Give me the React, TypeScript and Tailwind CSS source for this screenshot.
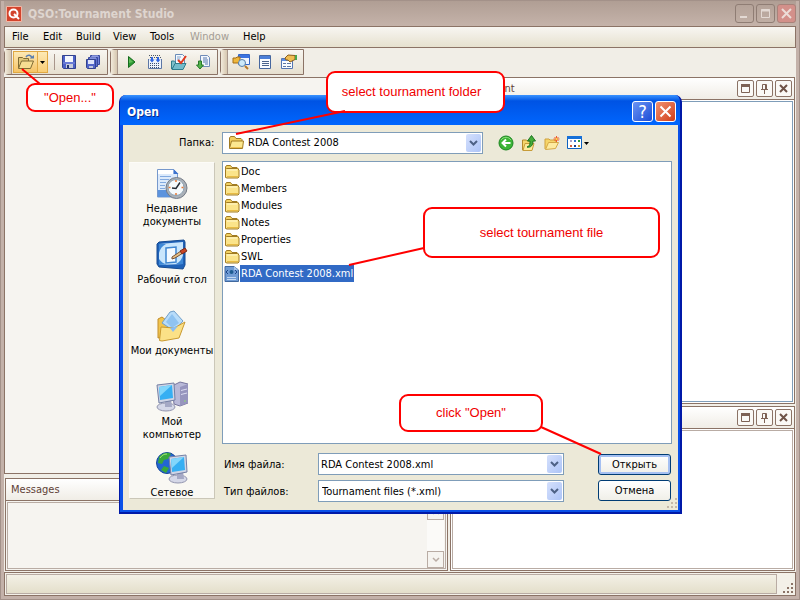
import type { ReactNode } from "react";

type IconProps = { children: ReactNode; size?: number };

function Glyph({ children, size = 16 }: IconProps) {
  return (
    <svg width={size} height={size} viewBox={`0 0 ${size} ${size}`} className="block shrink-0" aria-hidden="true">
      {children}
    </svg>
  );
}

/* ---------- toolbar icons ---------- */

const OpenIcon = () => (
  <svg width="18" height="16" viewBox="0 0 18 16" className="block shrink-0" aria-hidden="true">
    <path d="M1.500 14V3.500h4l1 1h5V7" fill="#e3c878" stroke="#7f6b35" />
    <path d="M1.500 14.500 4.500 7h12l-3 7.500z" fill="#f6dd92" stroke="#7f6b35" />
    <path d="M9 3c2-3 5-2 6 1" fill="none" stroke="#5b7fb0" strokeWidth="1.500" />
    <path d="M12.500 4.500h4.500V1z" fill="#5b7fb0" />
  </svg>
);

const SaveIcon = () => (
  <Glyph>
    <path d="M1.500 1.500h13v13h-12l-1-1z" fill="#4d61c8" stroke="#33438f" />
    <path d="M4 2h8v6H4z" fill="#f4f7fd" />
    <path d="M2 9h12" stroke="#8796e2" />
    <path d="M5 10h7v4H5z" fill="#c6cbdc" />
    <path d="M6 11h2v3H6z" fill="#26356f" />
  </Glyph>
);

const SaveAllIcon = () => (
  <Glyph>
    <path d="M5.500 1.500h9v9h-9z" fill="#7283db" stroke="#38489d" />
    <path d="M3.500 3.500h9v9h-9z" fill="#5b6dd0" stroke="#38489d" />
    <path d="M7 2h6M5 4h6" stroke="#a9b4ee" />
    <path d="M1.500 5.500h9v9h-8l-1-1z" fill="#5265c9" stroke="#33438f" />
    <path d="M3 6h6v4H3z" fill="#dfe4fa" />
    <path d="M4 12h4v2H4z" fill="#c1c7de" />
  </Glyph>
);

const PlayIcon = () => (
  <Glyph>
    <path d="M5.500 2.500v11L12 8z" fill="#2c9a33" stroke="#156a1c" />
    <path d="M6 4v5l4-1z" fill="#60bd58" />
  </Glyph>
);

const BuildIcon = () => (
  <Glyph>
    <path d="M2 1.500h12M3 3.500h11" stroke="#4b5665" strokeDasharray="1 1" />
    <path d="M1.500 5v9.500h13V5" fill="#eef3fb" stroke="#5c76a5" />
    <path d="M3 9.500h10M3 11.500h10M3 13.500h10" stroke="#3c4f72" strokeDasharray="1 1" />
    <path d="M5 3v4M11 3v4" stroke="#2f65e0" strokeWidth="2" />
    <path d="M2.500 5.500h5L5 8.500zM8.500 5.500h5L11 8.500z" fill="#2f65e0" />
  </Glyph>
);

const CheckDocIcon = () => (
  <Glyph>
    <path d="M4.500.5h7l2 2V10h-9z" fill="#f5f9fe" stroke="#6a8cb8" />
    <path d="M6 3h4M6 5h3" stroke="#7da0cb" />
    <path d="M.5 15V7h3l1 1v3z" fill="#7fc0ca" stroke="#2e7d8c" />
    <path d="m1 15.500 3-6h11l-3 6z" fill="#73bccb" stroke="#2e7d8c" />
    <path d="m7 6 3 3 5-7" fill="none" stroke="#e4391c" strokeWidth="2" />
  </Glyph>
);

const ExportIcon = () => (
  <Glyph>
    <path d="M5.500 1.500h7l2 2v9h-9z" fill="#f3f7fd" stroke="#6f8bb8" />
    <path d="M8 4h4M8 6h5M8 8h5M10 10h3" stroke="#5577ae" />
    <path d="M3.500 7v4h-2L5 15l3.500-4h-2V7z" fill="#55b34b" stroke="#27792a" />
  </Glyph>
);

const FindIcon = () => (
  <svg width="18" height="16" viewBox="0 0 18 16" className="block shrink-0" aria-hidden="true">
    <path d="M6.500.5h11v10h-11z" fill="#f1f6ff" stroke="#3466c8" />
    <path d="M7 1h10v3H7z" fill="#3c73e0" />
    <path d="M1 4h3l1-1h3v6H1z" fill="#efb73b" stroke="#a36d17" />
    <circle cx="10" cy="9" r="3.500" fill="#cdeafa" stroke="#577faa" />
    <path d="m13 12 3 3" stroke="#b7792a" strokeWidth="2" />
  </svg>
);

const ListIcon = () => (
  <Glyph>
    <path d="M2.500 1.500h11v13h-11z" fill="#fafcff" stroke="#47679f" />
    <path d="M3 2h10v3H3z" fill="#4c7fd8" />
    <path d="M5 7.500h7M5 9.500h7M5 11.500h7" stroke="#4b638c" />
  </Glyph>
);

const PropertiesIcon = () => (
  <svg width="18" height="16" viewBox="0 0 18 16" className="block shrink-0" aria-hidden="true">
    <path d="M1.500 4.500h11v10h-11z" fill="#fafcff" stroke="#5576b3" />
    <path d="M2 5h10v2H2z" fill="#5c8ce2" />
    <path d="M3 9.500h3M7 9.500h4M3 12.500h3M7 12.500h4" stroke="#5f78a5" />
    <path d="M5 4 8 1l7 .5v4L10 8 8 6H6z" fill="#f0bd52" stroke="#8a5d1b" />
    <path d="M15 1h2v5h-2z" fill="#4aa64b" />
  </svg>
);

/* ---------- dialog icons ---------- */

const FolderIcon = () => (
  <Glyph>
    <path d="M1.500 3 2.500 1.500h4L8 3.500h5l1 1V13h-12z" fill="#f3d263" stroke="#a17b22" />
    <path d="M1.500 13.500v-8l1-1h11l1.500 1.500v7l-1 1h-11z" fill="#fbe48a" stroke="#a17b22" />
    <path d="M3 6h10" stroke="#fff8cf" />
    <path d="M3 12.500h11" stroke="#e8bb44" />
  </Glyph>
);

const OpenFolderIcon = () => (
  <Glyph>
    <path d="M1.500 13V3l1-1.500h4L8 3.500h5l1 1V7" fill="#f3cf5e" stroke="#a17b22" />
    <path d="M1.500 13.500 3.500 6h12l-1 7.500z" fill="#fce88f" stroke="#a17b22" />
    <path d="M3 12.500h11" stroke="#efc04c" />
  </Glyph>
);

const XmlIcon = () => (
  <Glyph>
    <path d="M1 .5h9L14.500 4v11.500H1z" fill="#6f9bd4" stroke="#41699f" />
    <path d="M10 0v4h4" fill="#a6c4ea" />
    <path d="m4 4-2 2 2 2M11 4l2 2-2 2" fill="none" stroke="#1e4688" />
    <circle cx="7.500" cy="6" r="2" fill="#1d5b91" />
    <path d="M3 11.500h9M3 13.500h9" stroke="#c3d8f1" />
  </Glyph>
);

const BackIcon = () => (
  <Glyph>
    <circle cx="8" cy="8" r="7" fill="#3bb435" stroke="#1d8622" />
    <path d="M3 5a6 6 0 0 1 10 0" fill="none" stroke="#8ddc7d" />
    <path d="M12.500 8H5M8 4.500 4.500 8 8 11.500" fill="none" stroke="#fff" strokeWidth="2" />
  </Glyph>
);

const UpIcon = () => (
  <Glyph>
    <path d="M1.500 15V5h4l1 1h5v8z" fill="#f6d76d" stroke="#b4892b" />
    <path d="m2 15.500 2-7h9l-2 7z" fill="#fdeb9c" stroke="#c79c38" />
    <path d="M6 12c3-1 3-3 3-6H6.500l4-5.500 4 5.500H12c0 4-2 7-6 6z" fill="#45ad39" stroke="#1d7421" />
  </Glyph>
);

const NewFolderIcon = () => (
  <Glyph>
    <path d="M1 14V4h4l1 1h6v3" fill="#f6d56a" stroke="#cfa13d" />
    <path d="m1.500 14.500 3-7h10l-3 6z" fill="#fdeba0" stroke="#d5a845" />
    <path d="M12.500 1v6M9.500 4h6M10.500 2l4 4M14.500 2l-4 4" stroke="#ee5b2d" />
    <circle cx="12.500" cy="4" r="1" fill="#ffe14d" />
  </Glyph>
);

const ViewsIcon = () => (
  <svg width="23" height="16" viewBox="0 0 23 16" className="block shrink-0" aria-hidden="true">
    <path d="M.5 1.500h14v12H.5z" fill="#fff" stroke="#0e62c0" />
    <path d="M0 1h15v3H0z" fill="#1670d8" />
    <path d="M3 5h2v2H3z" fill="#a9a0c8" />
    <path d="M7 5h2v2H7z" fill="#2f6fd0" />
    <path d="M11 5h2v2h-2z" fill="#2d9a3c" />
    <path d="M3 10h2v2H3z" fill="#d9603a" />
    <path d="M7 10h2v2H7z" fill="#173c8c" />
    <path d="M11 10h2v2h-2z" fill="#c79b2e" />
    <path d="M17 7h5l-2.500 3z" fill="#000" />
  </svg>
);

/* ---------- places bar icons ---------- */

const RecentIcon = () => (
  <Glyph size={32}>
    <path d="M1.500 1.500h16l4 4V29h-20z" fill="#dceafb" stroke="#7698cc" />
    <path d="M2 2h15v4H2z" fill="#fff" />
    <path d="M17.500 1v5h5z" fill="#3d73ce" />
    <path d="M4 8.500h11M4 11.500h9M4 14.500h6M4 17.500h5M4 20.500h5" stroke="#82aae0" />
    <path d="M2 22h20v7H2z" fill="#5c93dd" />
    <circle cx="20.500" cy="20" r="10.500" fill="#abb1b8" stroke="#737b86" />
    <circle cx="20" cy="19.500" r="8" fill="#f5fafc" stroke="#8ba0b0" />
    <path d="M20 12v2M20 25v2M12.500 19.500h2M25.500 19.500h2" stroke="#e57735" strokeWidth="1.500" />
    <path d="m16 20 4 .5 4-6" fill="none" stroke="#232a34" strokeWidth="1.500" />
  </Glyph>
);

const DesktopIcon = () => (
  <Glyph size={32}>
    <path d="M1 5 3 3l25-2 1 2v23l-2 4-24-2-2-3z" fill="#1f62b8" stroke="#164b91" />
    <path d="M3 5 27 3v22L3 26z" fill="#c9e6fc" />
    <path d="M3 5h7c-4 2-6 5-7 9zM27 25h-7c4-2 6-5 7-9zM3 26v-6c2 3 5 5 8 5.500z" fill="#3d88d6" />
    <path d="m10 9 10-1v15l-10 1z" fill="#f4faff" stroke="#3f86d0" strokeWidth="1.500" />
    <path d="m16 18 9-6 2 2-8 5-3 1z" fill="#e9c286" stroke="#745037" />
    <path d="m24 12 5-3 2 3-5 3z" fill="#c94524" stroke="#7d2c19" />
  </Glyph>
);

const DocumentsIcon = () => (
  <Glyph size={32}>
    <path d="M2 28V9l4-2 4 3 10 3v12z" fill="#f1c44e" stroke="#c28d29" />
    <path d="M6 13 14 2l4-1 9 10-9 10z" fill="#b7dcfa" stroke="#719fc9" />
    <path d="m10 12 6-8 7 9-7 5z" fill="#8fc3f1" />
    <path d="M3.500 30.500 5 17l13 1 11-6-6 16-17 3z" fill="#fbe187" stroke="#c99a30" />
    <path d="m14 18 8-2-5 6z" fill="#8abdf1" />
  </Glyph>
);

const Monitor = ({ x, y }: { x: number; y: number }) => (
  <g transform={`translate(${x} ${y})`}>
    <ellipse cx="10" cy="25" rx="9" ry="4" fill="#d5d8e8" stroke="#9295af" />
    <path d="m9 18 6-1 1 8H9z" fill="#a5a9c5" />
    <path d="M1 3 18 1l1 17-16 3z" fill="#cfd5e6" stroke="#7580a4" />
    <path d="m3 5 13-2 1 13-13 2z" fill="#36aff3" />
    <path d="m3 5 13-2-12 11z" fill="#83d6fb" />
  </g>
);

const ComputerIcon = () => (
  <Glyph size={32}>
    <path d="m16 5 8-4 8 2v19l-8 3-6-2z" fill="#b9b9d8" stroke="#77759c" />
    <path d="m24 6 8-3v19l-8 3z" fill="#9795be" />
    <path d="M25 9.500 31 8M25 13.500 31 12" stroke="#dcdcf1" />
    <path d="M28 20h2" stroke="#8ddb72" />
    <Monitor x={0} y={1} />
  </Glyph>
);

const NetworkIcon = () => (
  <Glyph size={32}>
    <circle cx="11" cy="11" r="10.500" fill="#2366d3" stroke="#16479b" />
    <path d="M3 5c4-5 9-5 12-3l-3 5-4 1-2 4-4-1zM8 14l5 2-3 5-5-3z" fill="#39a83b" />
    <path d="M4 6c2-3 4-4 7-4" fill="none" stroke="#a9e478" />
    <Monitor x={12} y={2} />
  </Glyph>
);

/* ---------- main window ---------- */

function Toolbar({ children, label }: { children: ReactNode; label: string }) {
  return (
    <div
      role="toolbar"
      aria-label={label}
      className="flex h-[26px] items-stretch rounded-l-sm border border-[#8b7366] bg-linear-to-b from-[#f8f6f1] to-[#e6dfcf] pr-[2px]"
    >
      <span className="mr-px w-[7px] border-r border-[#a8968b] bg-linear-to-r from-[#f2ebdc] to-[#d6c7b0]" />
      {children}
    </div>
  );
}

function ToolButton({ label, children }: { label: string; children: ReactNode }) {
  return (
    <button type="button" aria-label={label} className="flex w-6 items-center justify-center">
      {children}
    </button>
  );
}

function CaptionButton({ label, close, children }: { label: string; close?: boolean; children: ReactNode }) {
  return (
    <button
      type="button"
      aria-label={label}
      className={
        close
          ? "flex size-[19px] items-center justify-center rounded-[3px] border border-[#a8827a] bg-[#d3908a]"
          : "flex size-[19px] items-center justify-center rounded-[3px] border border-[#8f7d74] bg-linear-to-b from-[#b5a399] to-[#c0aea4]"
      }
    >
      {children}
    </button>
  );
}

function PanelButton({ label, children }: { label: string; children: ReactNode }) {
  return (
    <button
      type="button"
      aria-label={label}
      className="flex size-[17px] items-center justify-center rounded-[2px] border border-[#8b7366] bg-[#faf9f6]"
    >
      <svg width="11" height="11" viewBox="0 0 11 11" aria-hidden="true">
        {children}
      </svg>
    </button>
  );
}

function PanelHeader({ title, controls }: { title: string; controls?: boolean }) {
  return (
    <div className="flex h-[22px] shrink-0 items-center gap-[2px] border-b border-[#8b7366] bg-linear-to-b from-white to-[#f0ede6] pr-[2px] pl-[5px] text-[#5f4136]">
      <h2 className="flex-1">{title}</h2>
      {controls && (
        <>
          <PanelButton label="Maximize panel">
            <path d="M1.500 1.500h8v8h-8z" fill="none" stroke="#7d6255" />
            <path d="M1 1h9v3H1z" fill="#7d6255" />
          </PanelButton>
          <PanelButton label="Pin panel">
            <path d="M3.500 6V1.500h4V6M2 6.500h7M5.500 7v4M6.500 2v4" fill="none" stroke="#7d6255" />
          </PanelButton>
          <PanelButton label="Close panel">
            <path d="m2 2 7 7M9 2 2 9" stroke="#6e5347" strokeWidth="2" />
          </PanelButton>
        </>
      )}
    </div>
  );
}

function ScrollArrow({ up }: { up?: boolean }) {
  return (
    <button
      type="button"
      aria-label={up ? "Scroll up" : "Scroll down"}
      className="flex size-[17px] items-center justify-center border border-[#b9aca4] bg-[#f6f4f0]"
    >
      <svg width="8" height="6" viewBox="0 0 8 6" aria-hidden="true">
        <path d={up ? "M1 5l3-3 3 3" : "M1 1l3 3 3-3"} fill="none" stroke="#b9aca4" strokeWidth="1.500" />
      </svg>
    </button>
  );
}

function Grip({ color }: { color: string }) {
  return (
    <svg width="11" height="11" viewBox="0 0 11 11" className="block" aria-hidden="true">
      <path d="M8 0h2v2H8zM4 4h2v2H4zM8 4h2v2H8zM0 8h2v2H0zM4 8h2v2H4zM8 8h2v2H8z" fill={color} />
    </svg>
  );
}

const menus = [
  { name: "File", width: "w-[31px]" },
  { name: "Edit", width: "w-[33px]" },
  { name: "Build", width: "w-[37px]" },
  { name: "View", width: "w-[37px]" },
  { name: "Tools", width: "w-[40px]" },
  { name: "Window", width: "w-[53px]", disabled: true },
  { name: "Help", width: "w-[37px]" },
];

function MainWindow() {
  return (
    <div className="flex h-full flex-col border border-[#a39189] bg-[#c3b1a9] px-[3px] pb-[3px]">
      <header className="flex h-[25px] shrink-0 items-center gap-[2px] bg-linear-to-b from-[#b09e94] to-[#c5b3aa] pl-[2px]">
        <svg width="16" height="16" viewBox="0 0 16 16" className="mr-1" aria-hidden="true">
          <path d="M.5.5h15v15H.5z" fill="#d3432c" stroke="#f3b7a6" />
          <circle cx="7.500" cy="7.500" r="4" fill="none" stroke="#fff" strokeWidth="2" />
          <path d="m8 8 5 5" stroke="#fff" strokeWidth="2" />
        </svg>
        <h1 className="flex-1 text-[12px] font-bold text-[#ded5cf]">QSO:Tournament Studio</h1>
        <CaptionButton label="Minimize">
          <svg width="11" height="11" viewBox="0 0 11 11"><path d="M1 9h7" stroke="#e3d9d3" strokeWidth="2" /></svg>
        </CaptionButton>
        <CaptionButton label="Maximize">
          <svg width="11" height="11" viewBox="0 0 11 11">
            <path d="M1.500 1.500h8v8h-8z" fill="none" stroke="#e3d9d3" />
            <path d="M1 2.500h9" stroke="#e3d9d3" strokeWidth="2" />
          </svg>
        </CaptionButton>
        <CaptionButton label="Close" close>
          <svg width="11" height="11" viewBox="0 0 11 11"><path d="m1 1 9 9M10 1l-9 9" stroke="#ecdcd7" strokeWidth="2" /></svg>
        </CaptionButton>
      </header>

      <div className="flex min-h-0 flex-1 flex-col bg-[#f1eee7]">
        <nav className="flex h-[22px] shrink-0 items-center border border-[#8b7366] bg-linear-to-b from-[#f8f6f2] to-[#e6e1cf] pl-[7px]">
          {menus.map((m) => (
            <button key={m.name} type="button" disabled={m.disabled} className={`${m.width} text-left text-black disabled:text-[#a39c94]`}>
              {m.name}
            </button>
          ))}
        </nav>

        <div className="flex h-[29px] shrink-0 items-start gap-[2px] pt-px">
          <Toolbar label="Standard">
            <button type="button" aria-label="Open" className="my-px flex w-[25px] items-center justify-center border border-[#e0a843] bg-linear-to-b from-[#fde9b4] to-[#f6c466]">
              <OpenIcon />
            </button>
            <button type="button" aria-label="Recent tournaments" className="my-px mr-1 flex w-[10px] items-center justify-center border border-l-0 border-[#e0a843] bg-linear-to-b from-[#fde9b4] to-[#f9cd75]">
              <svg width="5" height="3" viewBox="0 0 5 3" aria-hidden="true"><path d="M0 0h5L2.500 3z" fill="#000" /></svg>
            </button>
            <span className="mx-[2px] my-1 w-px bg-[#a8968b]" />
            <ToolButton label="Save"><SaveIcon /></ToolButton>
            <ToolButton label="Save all"><SaveAllIcon /></ToolButton>
          </Toolbar>
          <Toolbar label="Build">
            <ToolButton label="Run"><PlayIcon /></ToolButton>
            <ToolButton label="Build"><BuildIcon /></ToolButton>
            <ToolButton label="Check"><CheckDocIcon /></ToolButton>
            <ToolButton label="Export"><ExportIcon /></ToolButton>
          </Toolbar>
          <Toolbar label="View">
            <ToolButton label="Find"><FindIcon /></ToolButton>
            <ToolButton label="List"><ListIcon /></ToolButton>
            <ToolButton label="Properties"><PropertiesIcon /></ToolButton>
          </Toolbar>
        </div>

        <main className="flex min-h-0 flex-1 gap-[2px] pr-px">
          <div className="flex min-w-0 flex-1 flex-col gap-1">
            <div className="min-h-0 flex-1 border border-[#8b7366] bg-[#f6f4f0]" />
            <section className="ml-px flex h-[93px] shrink-0 flex-col border border-[#8b7366] bg-[#f6f4f0]">
              <PanelHeader title="Messages" />
              <div className="m-px flex min-h-0 flex-1 justify-end border border-[#b9aca4] pr-px">
                <div className="flex w-[17px] flex-col justify-between bg-[#fbfaf8]">
                  <ScrollArrow up />
                  <ScrollArrow />
                </div>
              </div>
            </section>
          </div>
          <div className="flex w-[345px] shrink-0 flex-col gap-[2px]">
            <section className="flex min-h-0 flex-2 flex-col border border-[#8b7366] bg-white">
              <PanelHeader title="Tournament" controls />
              <div className="m-px min-h-0 flex-1 border border-[#7f9db9]" />
            </section>
            <section className="flex min-h-0 flex-1 flex-col border border-[#8b7366] bg-white">
              <PanelHeader title="" controls />
              <div className="m-px min-h-0 flex-1 border border-[#b9aca4]" />
            </section>
          </div>
        </main>

        <footer className="mt-px flex h-[24px] shrink-0 items-end border border-[#8b7366] bg-[#f3f0e8] p-px">
          <div className="h-full flex-1 border border-[#b9aca4] bg-linear-to-b from-[#f3f0e6] to-[#e4dfcb]" />
          <div className="flex w-[17px] justify-end"><Grip color="#8b7366" /></div>
        </footer>
      </div>
    </div>
  );
}

/* ---------- open dialog ---------- */

const chevron = (
  <svg width="9" height="7" viewBox="0 0 9 7" aria-hidden="true">
    <path d="m1 1 3.500 3.500L8 1" fill="none" stroke="#4d6185" strokeWidth="2" />
  </svg>
);

const dropClass =
  "m-px flex w-[15px] shrink-0 items-center justify-center rounded-[2px] bg-linear-to-br from-[#d5e0fc] to-[#adc4f7]";

const places = [
  { lines: ["Недавние", "документы"], icon: <RecentIcon /> },
  { lines: ["Рабочий стол"], icon: <DesktopIcon /> },
  { lines: ["Мои документы"], icon: <DocumentsIcon /> },
  { lines: ["Мой", "компьютер"], icon: <ComputerIcon /> },
  { lines: ["Сетевое"], icon: <NetworkIcon /> },
];

const folders = ["Doc", "Members", "Modules", "Notes", "Properties", "SWL"];

function OpenDialog() {
  return (
    <div
      role="dialog"
      aria-labelledby="dialog-title"
      className="absolute top-[95px] left-[119px] flex h-[419px] w-[563px] flex-col overflow-hidden rounded-t-[7px] border-r-2 border-b-2 border-l border-[#0019a8] bg-[#0a50e8]"
    >
      <div className="flex h-[30px] shrink-0 items-center gap-[2px] bg-linear-to-b from-[#3a93ff] via-[#0053e4] via-20% to-[#0066fe] pt-[3px] pr-1 pl-[7px]">
        <h2 id="dialog-title" className="flex-1 text-[12px] font-bold text-white [text-shadow:1px_1px_0_#0a2c8c]">
          Open
        </h2>
        <button type="button" aria-label="Help" className="flex size-[21px] items-center justify-center rounded-[3px] border border-white bg-linear-to-br from-[#6c93f3] to-[#1b4bd6] text-[18px] leading-4 text-white">
          ?
        </button>
        <button type="button" aria-label="Close" className="flex size-[21px] items-center justify-center rounded-[3px] border border-white bg-linear-to-br from-[#f0906f] to-[#cf3a12]">
          <svg width="13" height="13" viewBox="0 0 13 13" aria-hidden="true"><path d="m1.500 1.500 10 10M11.500 1.500l-10 10" stroke="#fff" strokeWidth="2" /></svg>
        </button>
      </div>

      <div className="mr-[2px] mb-[2px] ml-[3px] flex min-h-0 flex-1 gap-[7px] bg-[#ece9d8] pr-[6px] pl-[6px]">
        <nav className="mt-[37px] flex h-[337px] w-[86px] shrink-0 flex-col overflow-hidden border border-t-[#fdfcf8] border-r-[#cbc7b8] border-b-[#cbc7b8] border-l-[#fdfcf8] bg-[#f9f8f3] pt-[5px]">
          {places.map((p) => (
            <button key={p.lines.join(" ")} type="button" className="flex h-[71px] shrink-0 flex-col items-center gap-[2px] leading-[13px] whitespace-nowrap">
              {p.icon}
              <span>
                {p.lines.map((l) => (
                  <span key={l} className="block">{l}</span>
                ))}
              </span>
            </button>
          ))}
        </nav>

        <div className="flex min-w-0 flex-1 flex-col">
          <div className="mt-[7px] flex h-[22px] shrink-0 items-center">
            <label htmlFor="folder" className="-ml-[43px] w-[43px] shrink-0">Папка:</label>
            <div className="flex h-full w-[261px] border border-[#7f9db9] bg-white">
              <span className="flex items-center pr-px pl-[5px]"><OpenFolderIcon /></span>
              <select id="folder" className="min-w-0 flex-1 appearance-none bg-transparent pl-[3px]">
                <option>RDA Contest 2008</option>
              </select>
              <span className={dropClass}>{chevron}</span>
            </div>
            <div className="ml-[15px] flex gap-[7px]">
              <button type="button" aria-label="Back"><BackIcon /></button>
              <button type="button" aria-label="Up one level"><UpIcon /></button>
              <button type="button" aria-label="New folder"><NewFolderIcon /></button>
              <button type="button" aria-label="Views"><ViewsIcon /></button>
            </div>
          </div>

          <ul className="mt-[7px] h-[283px] shrink-0 border border-[#7f9db9] bg-white pt-px pl-px">
            {folders.map((f) => (
              <li key={f}>
                <button type="button" className="flex h-[17px] items-center">
                  <FolderIcon />
                  <span className="px-px">{f}</span>
                </button>
              </li>
            ))}
            <li>
              <button type="button" aria-pressed="true" className="flex h-[17px] items-center">
                <XmlIcon />
                <span className="bg-[#316ac5] px-px leading-[17px] text-white">RDA Contest 2008.xml</span>
              </button>
            </li>
          </ul>

          <div className="mt-[9px] flex items-start justify-between">
            <div className="flex flex-col gap-[5px] pl-[2px]">
              <div className="flex h-[22px] items-center">
                <label htmlFor="file-name" className="w-[94px] pt-px">Имя файла:</label>
                <div className="flex h-full w-[246px] border border-[#7f9db9] bg-white">
                  <input id="file-name" defaultValue="RDA Contest 2008.xml" className="min-w-0 flex-1 pt-px pl-[2px] outline-none" />
                  <button type="button" aria-label="Previous names" className={dropClass}>{chevron}</button>
                </div>
              </div>
              <div className="flex h-[22px] items-center">
                <label htmlFor="file-type" className="w-[94px] pt-px">Тип файлов:</label>
                <div className="flex h-full w-[246px] border border-[#7f9db9] bg-white">
                  <select id="file-type" className="min-w-0 flex-1 appearance-none bg-transparent pt-px pl-[3px]">
                    <option>Tournament files (*.xml)</option>
                  </select>
                  <span className={dropClass}>{chevron}</span>
                </div>
              </div>
            </div>
            <div className="mt-px flex w-[74px] flex-col gap-[5px] pr-px">
              <button type="button" className="h-[21px] rounded-[3px] border border-[#003c74] bg-linear-to-b from-white to-[#f0efe8] shadow-[inset_0_0_0_2px_#a5c0f2]">
                Открыть
              </button>
              <button type="button" className="h-[21px] rounded-[3px] border border-[#003c74] bg-linear-to-b from-white to-[#f0efe8]">
                Отмена
              </button>
            </div>
          </div>
        </div>
      </div>
      <div className="absolute right-[2px] bottom-[3px]"><Grip color="#c4b8a8" /></div>
    </div>
  );
}

/* ---------- instruction callouts ---------- */

const calloutClass =
  "absolute flex items-center justify-center rounded-[9px] border-2 border-[#ff0000] bg-white font-['Liberation_Sans',Arial,sans-serif] text-[13px] text-[#f00000]";

function Callouts() {
  return (
    <>
      <div className={`${calloutClass} top-[83px] left-[26px] h-[29px] w-[88px]`}>"Open..."</div>
      <div className={`${calloutClass} top-[71px] left-[326px] h-[42px] w-[179px] pr-2`}>select tournament folder</div>
      <div className={`${calloutClass} top-[207px] left-[423px] h-[51px] w-[237px]`}>select tournament file</div>
      <div className={`${calloutClass} top-[394px] left-[399px] h-[38px] w-[144px]`}>click "Open"</div>
      <svg width="800" height="600" viewBox="0 0 800 600" className="pointer-events-none absolute top-0 left-0" aria-hidden="true">
        <path d="M22 69 40 84M345 111 236 134M424 248 349 265M541 427 601 454" fill="none" stroke="#ff0000" strokeWidth="2" />
      </svg>
    </>
  );
}

export default function App() {
  return (
    <div className="relative h-screen min-h-[600px] overflow-hidden font-['DejaVu_Sans_Condensed','DejaVu_Sans',sans-serif] text-[11px] leading-[14px] text-black">
      <MainWindow />
      <OpenDialog />
      <Callouts />
    </div>
  );
}
